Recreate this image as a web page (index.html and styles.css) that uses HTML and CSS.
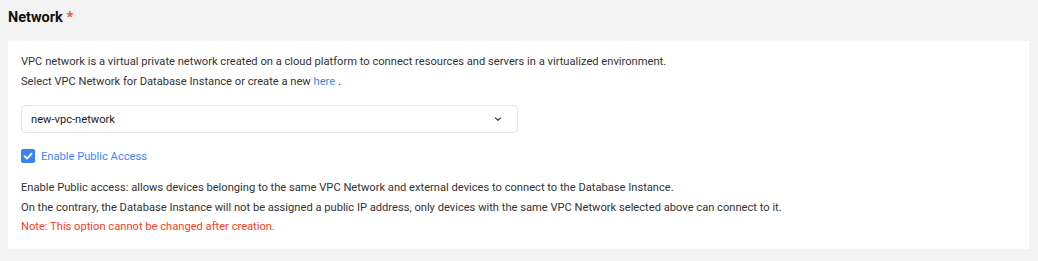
FILE: index.html
```html
<!DOCTYPE html>
<html lang="en">
<head>
    <meta charset="UTF-8">
    <meta name="viewport" content="width=device-width, initial-scale=1.0">
    <title>Network</title>
    <link rel="stylesheet" href="styles.css">
</head>
<body>
    <div class="section">
        <h2 class="section-title">Network <span class="required">*</span></h2>
        <div class="card">
            <p class="intro">
                VPC network is a virtual private network created on a cloud platform to connect resources and servers in a virtualized environment.<br>
                Select VPC Network for Database Instance or create a new <a href="#">here</a> .
            </p>
            <div class="select">
                <span>new-vpc-network</span>
                <svg class="chevron" width="10" height="10" viewBox="0 0 10 10">
                    <path d="M2.5 4 L5 6.3 L7.5 4" fill="none" stroke="#444" stroke-width="1.3" stroke-linecap="round" stroke-linejoin="round"/>
                </svg>
            </div>
            <label class="check">
                <span class="box">
                    <svg width="14" height="14" viewBox="0 0 14 14">
                        <path d="M3.5 7.2 L6 9.6 L10.6 4.6" fill="none" stroke="#fff" stroke-width="1.8" stroke-linecap="round" stroke-linejoin="round"/>
                    </svg>
                </span>
                Enable Public Access
            </label>
            <p class="help">
                Enable Public access: allows devices belonging to the same VPC Network and external devices to connect to the Database Instance.<br>
                On the contrary, the Database Instance will not be assigned a public IP address, only devices with the same VPC Network selected above can connect to it.<br>
                <span class="note">Note: This option cannot be changed after creation.</span>
            </p>
        </div>
    </div>
</body>
</html>
```

FILE: styles.css
```css
/* General styling */
body {
    font-family: Roboto, 'Liberation Sans', Arial, sans-serif;
    margin: 0;
    padding: 0;
    background: #f3f3f3;
    color: #333;
}
.section {
    padding: 8px 9px 8px 8px;
}
.section-title {
    font-size: 14.5px;
    font-weight: bold;
    line-height: 20px;
    margin: 0 0 13px;
    color: #111;
}
.required {
    color: #ff4d2a;
}
.card {
    background: #fff;
    padding: 11px 13px 12px;
    font-size: 11.15px;
}
.intro {
    margin: 0;
    line-height: 20px;
}
.intro a {
    color: #3d86f5;
    text-decoration: none;
}
/* Select box */
.select {
    width: 497px;
    height: 28px;
    box-sizing: border-box;
    margin-top: 13px;
    border: 1px solid #e6e6e6;
    border-radius: 4px;
    display: flex;
    align-items: center;
    justify-content: space-between;
    padding: 0 14px 0 9px;
    color: #222;
}
.chevron {
    display: block;
}
/* Checkbox */
.check {
    display: flex;
    align-items: center;
    gap: 6px;
    margin-top: 13px;
    height: 20px;
    color: #3d86f5;
}
.box {
    width: 14px;
    height: 14px;
    border-radius: 2px;
    background: #3b82f6;
    display: flex;
}
.help {
    margin: 12px 0 0;
    line-height: 19.5px;
}
.note {
    color: #f2431c;
}
```
